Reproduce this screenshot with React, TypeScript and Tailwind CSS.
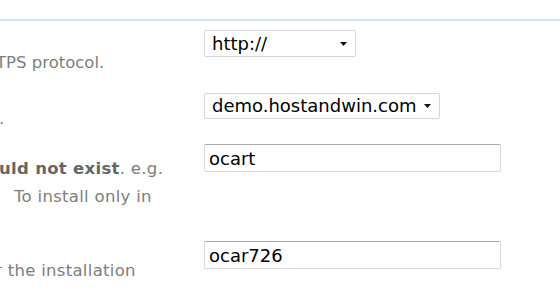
import React from "react";

function FakeSelect({ value, width, height }: { value: string; width: string; height: string }) {
  return (
    <div
      className={`${width} ${height} flex items-center justify-between rounded-[2px] border border-[#d2d6dc] bg-white pl-[7px] pr-[8px] text-[18px] leading-none text-black`}
    >
      <span>{value}</span>
      <svg width="7" height="4" viewBox="0 0 7 4">
        <path d="M0 0h7L3.5 4z" fill="#111" />
      </svg>
    </div>
  );
}

function TextBox({ value }: { value: string }) {
  return (
    <input
      readOnly
      value={value}
      className="h-[28px] w-[297px] rounded-[2px] border border-[#d3d6dc] border-t-[#a9a9a9] bg-white pl-[4px] font-['DejaVu_Sans',sans-serif] text-[18px] text-black outline-none"
    />
  );
}

export default function App() {
  return (
    <div className="h-[300px] w-[560px] overflow-hidden bg-white font-['DejaVu_Sans',sans-serif]">
      <div className="h-[19px]" />
      <div className="h-[2px] bg-[#d6e6f0]" />

      {/* protocol */}
      <div className="flex h-[63px]">
        <div className="w-[204px] shrink-0 overflow-hidden pt-[30px] text-[16.5px] leading-[24px] text-[#7d7d7d]">
          <div className="-ml-[4px] whitespace-nowrap">TPS protocol.</div>
        </div>
        <div className="pt-[9px]">
          <FakeSelect value="http://" width="w-[152px]" height="h-[27px]" />
        </div>
      </div>

      {/* domain */}
      <div className="flex h-[51px]">
        <div className="w-[204px] shrink-0 overflow-hidden pt-[23px] text-[16.5px] leading-[24px] text-[#7d7d7d]">
          <div className="-ml-[1px] whitespace-nowrap">.</div>
        </div>
        <div className="pt-[9px]">
          <FakeSelect value="demo.hostandwin.com" width="w-[236px]" height="h-[26px]" />
        </div>
      </div>

      {/* directory */}
      <div className="flex h-[97px]">
        <div className="w-[204px] shrink-0 overflow-hidden pt-[20px] text-[16.5px] leading-[28px] tracking-[0.3px] text-[#7d7d7d]">
          <div className="-ml-[1px] whitespace-nowrap">
            <b className="font-bold text-[#666]">uld not exist</b>. e.g.
          </div>
          <div className="pl-[14px] whitespace-nowrap">To install only in</div>
        </div>
        <div className="pt-[9px]">
          <TextBox value="ocart" />
        </div>
      </div>

      {/* database */}
      <div className="flex h-[68px]">
        <div className="w-[204px] shrink-0 overflow-hidden pt-[27px] text-[16.5px] leading-[24px] tracking-[0.3px] text-[#7d7d7d]">
          <div className="-ml-[5px] whitespace-nowrap">r the installation</div>
        </div>
        <div className="pt-[9px]">
          <TextBox value="ocar726" />
        </div>
      </div>
    </div>
  );
}
